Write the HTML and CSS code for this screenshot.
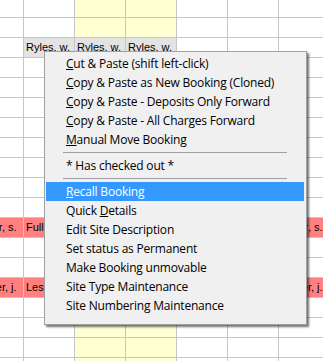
FILE: index.html
```html
<!DOCTYPE html>
<html>
<head>
<meta charset="utf-8">
<link rel="stylesheet" href="styles.css">
</head>
<body>
<div class="grid">
  <div class="c"></div><div class="c"></div><div class="c"></div><div class="c"></div><div class="c"></div><div class="c"></div><div class="c"></div>
  <div class="c"></div><div class="c"></div><div class="c"></div><div class="c"></div><div class="c"></div><div class="c"></div><div class="c"></div>
  <div class="c"></div><div class="c g">Ryles. w.</div><div class="c g">Ryles. w.</div><div class="c g">Ryles. w.</div><div class="c"></div><div class="c"></div><div class="c"></div>
  <div class="c"></div><div class="c"></div><div class="c"></div><div class="c"></div><div class="c"></div><div class="c"></div><div class="c"></div>
  <div class="c"></div><div class="c"></div><div class="c"></div><div class="c"></div><div class="c"></div><div class="c"></div><div class="c"></div>
  <div class="c"></div><div class="c"></div><div class="c"></div><div class="c"></div><div class="c"></div><div class="c"></div><div class="c"></div>
  <div class="c"></div><div class="c"></div><div class="c"></div><div class="c"></div><div class="c"></div><div class="c"></div><div class="c"></div>
  <div class="c"></div><div class="c"></div><div class="c"></div><div class="c"></div><div class="c"></div><div class="c"></div><div class="c"></div>
  <div class="c"></div><div class="c"></div><div class="c"></div><div class="c"></div><div class="c"></div><div class="c"></div><div class="c"></div>
  <div class="c"></div><div class="c"></div><div class="c"></div><div class="c"></div><div class="c"></div><div class="c"></div><div class="c"></div>
  <div class="c"></div><div class="c"></div><div class="c"></div><div class="c"></div><div class="c"></div><div class="c"></div><div class="c"></div>
  <div class="c r">Fuller, s.</div><div class="c r">Fuller, s.</div><div class="c r"></div><div class="c r"></div><div class="c r"></div><div class="c r"></div><div class="c r">Fuller, s.</div>
  <div class="c"></div><div class="c"></div><div class="c"></div><div class="c"></div><div class="c"></div><div class="c"></div><div class="c"></div>
  <div class="c"></div><div class="c"></div><div class="c"></div><div class="c"></div><div class="c"></div><div class="c"></div><div class="c"></div>
  <div class="c r">Lester, j.</div><div class="c r">Lester, j.</div><div class="c r"></div><div class="c r"></div><div class="c r"></div><div class="c r"></div><div class="c r">Lester, j.</div>
  <div class="c"></div><div class="c"></div><div class="c"></div><div class="c"></div><div class="c"></div><div class="c"></div><div class="c"></div>
  <div class="c"></div><div class="c"></div><div class="c"></div><div class="c"></div><div class="c"></div><div class="c"></div><div class="c"></div>
  <div class="c"></div><div class="c"></div><div class="c"></div><div class="c"></div><div class="c"></div><div class="c"></div><div class="c"></div>
  <div class="c"></div><div class="c"></div><div class="c"></div><div class="c"></div><div class="c"></div><div class="c"></div><div class="c"></div>
</div>

<div class="menu">
  <div class="item"><span class="u">C</span>ut &amp; Paste (shift left-click)</div>
  <div class="item"><span class="u">C</span>opy &amp; Paste as New Booking (Cloned)</div>
  <div class="item"><span class="u">C</span>opy &amp; Paste - Deposits Only Forward</div>
  <div class="item"><span class="u">C</span>opy &amp; Paste - All Charges Forward</div>
  <div class="item"><span class="u">M</span>anual Move Booking</div>
  <div class="sep"></div>
  <div class="item">* Has checked out *</div>
  <div class="sep"></div>
  <div class="item active"><span class="u">R</span>ecall Booking</div>
  <div class="item">Quick <span class="u">D</span>etails</div>
  <div class="item">Edit Site Description</div>
  <div class="item">Set status as Permanent</div>
  <div class="item">Make Booking unmovable</div>
  <div class="item">Site Type Maintenance</div>
  <div class="item">Site Numbering Maintenance</div>
</div>
</body>
</html>
```

FILE: styles.css
```css
html, body {
  margin: 0;
  padding: 0;
  background: #ffffff;
  overflow: hidden;
  width: 323px;
  height: 361px;
}

.grid {
  display: grid;
  grid-template-columns: repeat(7, 50px);
  grid-auto-rows: 19px;
  gap: 1px;
  background: #c6c6c6;
  margin: -2px 0 0 -27px;
  width: max-content;
}

.c {
  background: #ffffff;
  font-family: "Liberation Sans", Arial, sans-serif;
  font-size: 11px;
  line-height: 19px;
  color: #000;
  padding-left: 2px;
  white-space: nowrap;
  overflow: hidden;
}

.c:nth-child(7n+3),
.c:nth-child(7n+4) {
  background: #ffffd4;
}

.c.g {
  background: #e3e3e3;
}

.c.r {
  background: #ff8080;
}

.menu {
  position: absolute;
  left: 44px;
  top: 51px;
  box-sizing: border-box;
  width: 263px;
  height: 274px;
  border: 1px solid #a0a0a0;
  background: #f0f0f0;
  box-shadow: 2px 2px 2px rgba(0, 0, 0, 0.55);
  padding: 2px 2px 0 1px;
  font-family: "Open Sans", "Segoe UI", sans-serif;
  font-size: 12px;
  letter-spacing: -0.2px;
  color: #000;
}

.item {
  height: 19px;
  line-height: 19px;
  padding-left: 20px;
  white-space: nowrap;
}

.item.active {
  background: #3399ff;
  color: #ffffff;
}

.u {
  text-decoration: underline;
}

.sep {
  height: 7px;
  margin: 0 17px;
  position: relative;
}

.sep::after {
  content: "";
  position: absolute;
  left: 0;
  right: 0;
  top: 3px;
  height: 1px;
  background: #a0a0a0;
}
```
